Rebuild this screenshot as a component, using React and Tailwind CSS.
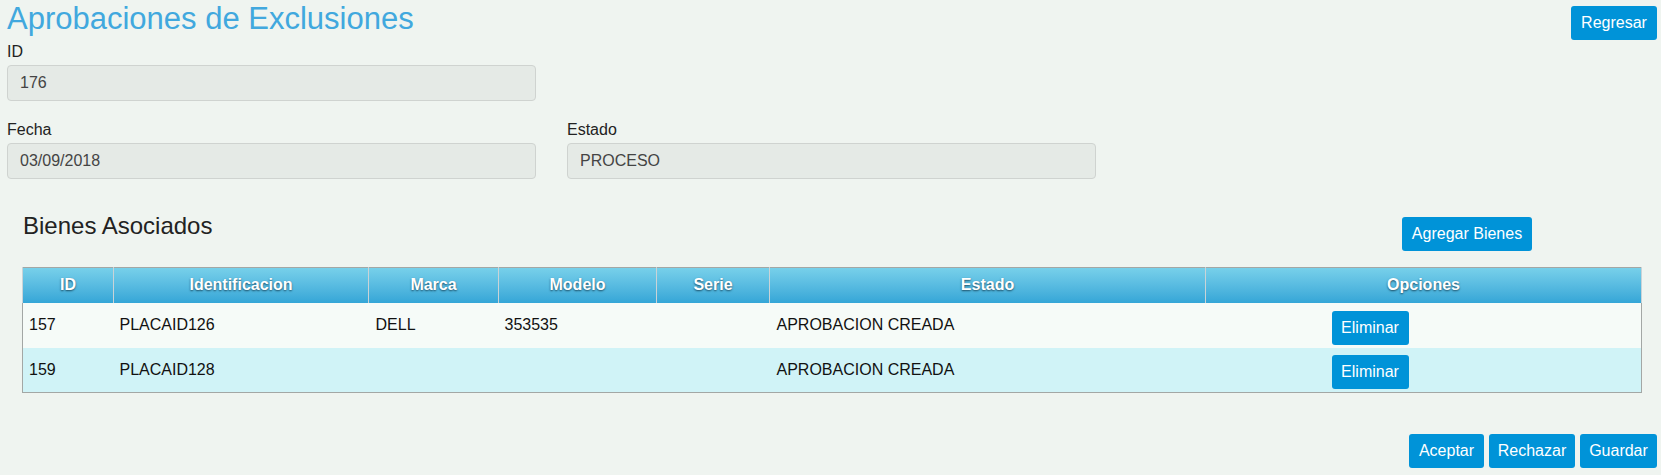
const bienes = [
  { id: 157, identificacion: 'PLACAID126', marca: 'DELL', modelo: '353535', serie: '', estado: 'APROBACION CREADA' },
  { id: 159, identificacion: 'PLACAID128', marca: '', modelo: '', serie: '', estado: 'APROBACION CREADA' },
];

const columns = [
  { label: 'ID', w: 'w-[91px]' },
  { label: 'Identificacion', w: 'w-[255px]' },
  { label: 'Marca', w: 'w-[130px]' },
  { label: 'Modelo', w: 'w-[158px]' },
  { label: 'Serie', w: 'w-[113px]' },
  { label: 'Estado', w: 'w-[436px]' },
  { label: 'Opciones', w: 'w-[436px]' },
];

const Btn = ({ children, className = '' }) => (
  <button className={`h-[34px] rounded-[3px] bg-[#0093d8] px-0 text-[16px] text-white ${className}`}>
    {children}
  </button>
);

const Field = ({ label, value }) => (
  <div>
    <label className="block h-[20px] text-[16px] leading-[20px] text-[#222]">{label}</label>
    <div className="mt-[3px] flex h-[36px] items-center rounded-[4px] border border-[#cfd3d0] bg-[#e5eae6] px-3 text-[16px] text-[#444]">
      {value}
    </div>
  </div>
);

const App = () => {
  return (
    <div className="min-h-[475px] bg-[#eff4f0] pl-[7px] pr-[4px] font-['Liberation_Sans',Arial,sans-serif]">
      <div className="flex items-start justify-between">
        <h1 className="pt-[1px] text-[31px] leading-[36px] text-[#41a8de]">Aprobaciones de Exclusiones</h1>
        <Btn className="mt-[6px] h-[33px] w-[86px]">Regresar</Btn>
      </div>

      <div className="mt-[2px] w-[529px]">
        <Field label="ID" value="176" />
      </div>

      <div className="mt-[19px] grid w-[1089px] grid-cols-[529px_529px] gap-x-[31px]">
        <Field label="Fecha" value="03/09/2018" />
        <Field label="Estado" value="PROCESO" />
      </div>

      <div className="mt-[32px] flex w-[1525px] items-start justify-between pl-[16px]">
        <h2 className="text-[24px] leading-[30px] text-[#222]">Bienes Asociados</h2>
        <Btn className="mt-[6px] w-[130px]">Agregar Bienes</Btn>
      </div>

      <table className="mt-[16px] ml-[15px] w-[1619px] table-fixed border-collapse border border-[#a3a7a5] text-[16px] text-[#111]">
        <thead>
          <tr className="h-[35px] bg-gradient-to-b from-[#77d0ea] to-[#34a6d7]">
            {columns.map((c) => (
              <th
                key={c.label}
                className={`${c.w} border-x border-[#c9d3d7] text-[16px] font-bold text-white [text-shadow:0_1px_2px_#1b4a60]`}
              >
                {c.label}
              </th>
            ))}
          </tr>
        </thead>
        <tbody>
          {bienes.map((b, i) => (
            <tr key={b.id} className={`h-[45px] ${i % 2 === 0 ? 'bg-[#f6fbf8]' : 'bg-[#d0f3f7]'}`}>
              <td className="px-[6px]">{b.id}</td>
              <td className="px-[6px]">{b.identificacion}</td>
              <td className="px-[7px]">{b.marca}</td>
              <td className="px-[6px]">{b.modelo}</td>
              <td className="px-[6px]">{b.serie}</td>
              <td className="px-[7px]">{b.estado}</td>
              <td className="pl-[126px] pt-[5px]">
                <Btn className="w-[77px]">Eliminar</Btn>
              </td>
            </tr>
          ))}
        </tbody>
      </table>

      <div className="mt-[41px] flex justify-end gap-[5px]">
        <Btn className="w-[75px]">Aceptar</Btn>
        <Btn className="w-[86px]">Rechazar</Btn>
        <Btn className="w-[77px]">Guardar</Btn>
      </div>
    </div>
  );
};

export default App;
